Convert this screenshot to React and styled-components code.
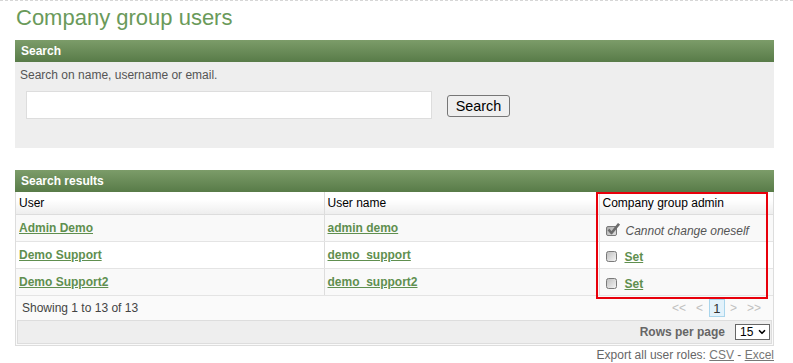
import React from 'react';
import styled, { createGlobalStyle } from 'styled-components';
import { ChevronDown } from 'lucide-react';

const GlobalStyle = createGlobalStyle`
  body {
    margin: 0;
    background: #fff;
    font-family: "Liberation Sans", Arial, sans-serif;
    font-size: 12px;
    color: #333;
  }
`;

const Page = styled.div`
  width: 793px;
  box-sizing: border-box;
  border-top: 1px dashed #d6d6d6;
  padding: 4px 19px 0 15px;
`;

const Title = styled.h1`
  margin: 0 0 9px 1px;
  font-size: 22px;
  font-weight: normal;
  line-height: 26px;
  color: #6a9a5a;
`;

const Panel = styled.section`
  position: relative;
  margin-bottom: 22px;

  &:last-child {
    margin-bottom: 0;
  }
`;

const PanelHeader = styled.div`
  height: 22px;
  line-height: 22px;
  padding: 0 6px;
  color: #fff;
  font-weight: bold;
  background: linear-gradient(#7c9c69, #587b48);
`;

const SearchBody = styled.div`
  height: 86px;
  box-sizing: border-box;
  padding: 6px 5px 0;
  background: #eee;
`;

const Hint = styled.div`
  line-height: 14px;
  color: #555;
`;

const SearchRow = styled.div`
  display: flex;
  align-items: center;
  gap: 15px;
  margin: 9px 0 0 6px;
`;

const SearchInput = styled.input`
  width: 406px;
  height: 28px;
  box-sizing: border-box;
  border: 1px solid #ddd;
  background: #fff;
  outline: none;
`;

const SearchButton = styled.button`
  width: 63px;
  height: 22px;
  margin-top: 2px;
  padding: 0;
  font-family: inherit;
  font-size: 14.4px;
  color: #000;
  background: #efefef;
  border: 1px solid #767676;
  border-radius: 3px;
`;

const ResultsWrap = styled.div`
  border-left: 1px solid #ddd;
  border-right: 1px solid #ddd;
`;

const Table = styled.table`
  width: 100%;
  border-collapse: collapse;
  table-layout: fixed;
`;

const HeadCell = styled.th`
  height: 22px;
  padding: 0 3px;
  text-align: left;
  font-weight: normal;
  color: #000;
  background: linear-gradient(#fff 35%, #eeeeee);
  border-bottom: 1px solid #ddd;
  border-right: ${(p) => (p.$last ? 'none' : '1px solid #ddd')};
`;

const Cell = styled.td`
  height: 26px;
  padding: 0 3px;
  background: ${(p) => (p.$striped ? '#f9f9f9' : '#fff')};
  border-bottom: 1px solid #e4e4e4;
  border-right: ${(p) => (p.$last ? 'none' : '1px solid #ddd')};
`;

const Link = styled.a`
  color: #5f8f4f;
  font-weight: bold;
  text-decoration: underline;
  cursor: pointer;
`;

const AdminBox = styled.div`
  display: flex;
  align-items: center;
  gap: ${(p) => p.$gap}px;
  padding: 3px 0 0 3px;
`;

const Note = styled.span`
  font-style: italic;
  color: #555;
  margin-top: 3px;
`;

const TableFooter = styled.div`
  border: 1px solid #ddd;
  border-top: none;
  background: #fafafa;
  padding: 0 1px 1px;
`;

const InfoRow = styled.div`
  display: flex;
  justify-content: space-between;
  align-items: center;
  height: 24px;
  padding: 0 6px 0 5px;
  color: #444;
`;

const Pager = styled.div`
  display: flex;
  align-items: center;
  gap: 5px;
  color: #c0c0c0;
`;

const PageArrow = styled.span`
  margin: 0 ${(p) => p.$outer || 0}px;
`;

const PageNum = styled.span`
  display: inline-flex;
  align-items: center;
  justify-content: center;
  width: 16px;
  height: 18px;
  margin-left: 1px;
  box-sizing: border-box;
  background: #e3f2fb;
  border: 1px solid #a9d5ec;
  color: #333;
  font-size: 13px;
`;

const RowsBar = styled.div`
  display: flex;
  justify-content: flex-end;
  align-items: center;
  gap: 10px;
  height: 22px;
  padding-right: 1px;
  background: #eee;
  border: 1px solid #ddd;
`;

const RowsLabel = styled.span`
  font-weight: bold;
  color: #666;
`;

const SelectBox = styled.div`
  position: relative;
  width: 35px;
  height: 16px;
`;

const Select = styled.select`
  appearance: none;
  width: 100%;
  height: 100%;
  box-sizing: border-box;
  padding: 0 0 0 4px;
  border: 1px solid #666;
  border-radius: 0;
  background: #fff;
  font: 12px "Liberation Sans", Arial, sans-serif;
  color: #000;
  outline: none;
`;

const SelectChevron = styled(ChevronDown)`
  position: absolute;
  right: 3px;
  top: 3px;
  pointer-events: none;
`;

const Export = styled.div`
  margin-top: 2px;
  text-align: right;
  line-height: 14px;
  color: #666;
`;

const ExportLink = styled.a`
  color: #777;
  text-decoration: underline;
`;

const Highlight = styled.div`
  position: absolute;
  left: 581px;
  top: 22px;
  width: 172px;
  height: 107px;
  box-sizing: border-box;
  border: 2px solid #e8000b;
  pointer-events: none;
`;

const UncheckedIcon = () => (
  <svg width="11" height="11" viewBox="0 0 11 11">
    <defs>
      <linearGradient id="ub" x1="0" y1="0" x2="1" y2="1">
        <stop offset="0" stopColor="#bdbdbd" />
        <stop offset="1" stopColor="#f6f6f6" />
      </linearGradient>
    </defs>
    <rect x="0.5" y="0.5" width="10" height="10" rx="2" fill="url(#ub)" stroke="#7a7a7a" />
  </svg>
);

const CheckedIcon = () => (
  <svg width="14" height="13" viewBox="0 0 14 13">
    <defs>
      <linearGradient id="cb" x1="0" y1="0" x2="1" y2="1">
        <stop offset="0" stopColor="#a8a8a8" />
        <stop offset="1" stopColor="#e4e4e4" />
      </linearGradient>
    </defs>
    <rect x="0.5" y="3.5" width="10" height="9" rx="1.5" fill="url(#cb)" stroke="#7a7a7a" />
    <path d="M2.5 6.5 L5.5 10 L13 0.8" fill="none" stroke="#6c6c6c" strokeWidth="2.6" strokeLinejoin="round" />
  </svg>
);

const users = [
  { name: 'Admin Demo', username: 'admin demo', self: true },
  { name: 'Demo Support', username: 'demo_support' },
  { name: 'Demo Support2', username: 'demo_support2' },
];

const App = () => (
  <>
    <GlobalStyle />
    <Page>
      <Title>Company group users</Title>

      <Panel>
        <PanelHeader>Search</PanelHeader>
        <SearchBody>
          <Hint>Search on name, username or email.</Hint>
          <SearchRow>
            <SearchInput type="text" />
            <SearchButton>Search</SearchButton>
          </SearchRow>
        </SearchBody>
      </Panel>

      <Panel>
        <PanelHeader>Search results</PanelHeader>
        <ResultsWrap>
          <Table>
            <colgroup>
              <col style={{ width: 308 }} />
              <col style={{ width: 275 }} />
              <col />
            </colgroup>
            <thead>
              <tr>
                <HeadCell>User</HeadCell>
                <HeadCell>User name</HeadCell>
                <HeadCell $last>Company group admin</HeadCell>
              </tr>
            </thead>
            <tbody>
              {users.map((u, i) => (
                <tr key={u.username}>
                  <Cell $striped={i % 2 === 0}>
                    <Link>{u.name}</Link>
                  </Cell>
                  <Cell $striped={i % 2 === 0}>
                    <Link>{u.username}</Link>
                  </Cell>
                  <Cell $striped={i % 2 === 0} $last>
                    {u.self ? (
                      <AdminBox $gap={6}>
                        <CheckedIcon />
                        <Note>Cannot change oneself</Note>
                      </AdminBox>
                    ) : (
                      <AdminBox $gap={8}>
                        <UncheckedIcon />
                        <Link>Set</Link>
                      </AdminBox>
                    )}
                  </Cell>
                </tr>
              ))}
            </tbody>
          </Table>
        </ResultsWrap>
        <TableFooter>
          <InfoRow>
            <span>Showing 1 to 13 of 13</span>
            <Pager>
              <PageArrow $outer={5}>&lt;&lt;</PageArrow>
              <PageArrow>&lt;</PageArrow>
              <PageNum>1</PageNum>
              <PageArrow>&gt;</PageArrow>
              <PageArrow $outer={5}>&gt;&gt;</PageArrow>
            </Pager>
          </InfoRow>
          <RowsBar>
            <RowsLabel>Rows per page</RowsLabel>
            <SelectBox>
              <Select defaultValue="15">
                <option>15</option>
                <option>30</option>
                <option>50</option>
              </Select>
              <SelectChevron size={10} strokeWidth={4} color="#000" />
            </SelectBox>
          </RowsBar>
        </TableFooter>
        <Export>
          Export all user roles: <ExportLink>CSV</ExportLink> - <ExportLink>Excel</ExportLink>
        </Export>
        <Highlight />
      </Panel>
    </Page>
  </>
);

export default App;
